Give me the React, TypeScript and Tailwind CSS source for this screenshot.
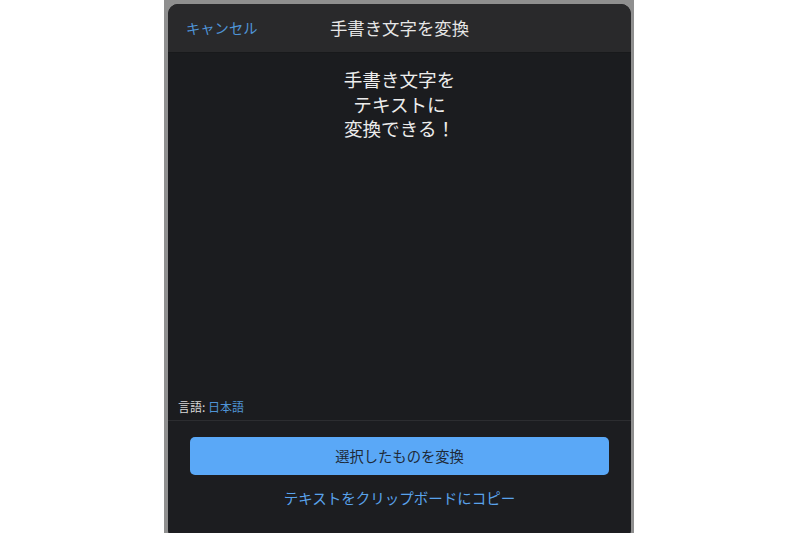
import React from "react";

export default function App() {
  return (
    <div
      className="w-[800px] h-[533px] bg-white flex overflow-hidden"
      style={{ fontFamily: '"Noto Sans CJK JP", "Noto Sans", sans-serif' }}
    >
      <div className="ml-[164px] w-[470px] h-full bg-[#8f8f8f] pt-[4px] pl-[4px] pr-[3px]">
        <div className="h-[536px] rounded-[10px] overflow-hidden flex flex-col bg-[#1c1d20]">
          <div className="h-[49px] bg-[#29292b] flex items-center relative border-b border-[#18191b] shrink-0">
            <span className="ml-[18px] text-[14.3px] text-[#4f94d6]">キャンセル</span>
            <span className="absolute left-0 right-0 text-center text-[17.4px] text-[#e6e6e6] pointer-events-none">
              手書き文字を変換
            </span>
          </div>
          <div className="h-[367px] bg-[#1b1c1f] flex flex-col shrink-0">
            <div className="pt-[14px] text-center text-[18.6px] leading-[24.5px] text-[#ececec]">
              <div>手書き文字を</div>
              <div>テキストに</div>
              <div>変換できる！</div>
            </div>
            <div className="mt-auto pb-[4px] pl-[10px] text-[12px] text-[#d8d8d8]">
              言語: <span className="text-[#4f94d6]">日本語</span>
            </div>
          </div>
          <div className="border-t border-[#2c2d30] flex flex-col items-center pt-[16px]">
            <div className="w-[419px] h-[38px] rounded-[5px] bg-[#5aa8f7] flex items-center justify-center text-[14.3px] text-[#1e2a38]">
              選択したものを変換
            </div>
            <div className="mt-[12px] text-[14.5px] text-[#5aa3ec]">
              テキストをクリップボードにコピー
            </div>
          </div>
        </div>
      </div>
    </div>
  );
}
